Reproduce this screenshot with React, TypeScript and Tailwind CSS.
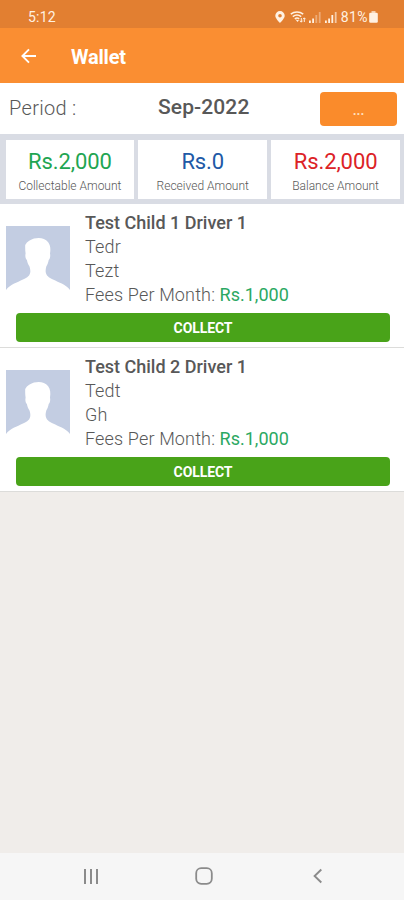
const SUMMARY = [
  { label: "Collectable Amount", value: "Rs.2,000", color: "text-[#1fa552]" },
  { label: "Received Amount", value: "Rs.0", color: "text-[#2059a6]" },
  { label: "Balance Amount", value: "Rs.2,000", color: "text-[#dc2226]" },
];

const CHILDREN = [
  { id: 1, name: "Test Child 1 Driver 1", school: "Tedr", area: "Tezt", fees: "Rs.1,000" },
  { id: 2, name: "Test Child 2 Driver 1", school: "Tedt", area: "Gh", fees: "Rs.1,000" },
];

function StatusBar() {
  return (
    <div className="flex h-[28px] items-center justify-between bg-[#e27f31] pt-[6px] pr-[26px] pl-[28px] text-[#fff1e2]">
      <span className="text-[14px] leading-none tracking-[0.2px]">5:12</span>
      <div className="flex items-center">
        <svg className="mr-[5px] h-[12px] w-[10px]" viewBox="0 0 10 12" fill="currentColor">
          <path fillRule="evenodd" d="M5 0a4.700 4.700 0 0 0-4.700 4.700C.3 7.600 5 12 5 12s4.700-4.400 4.700-7.300A4.700 4.700 0 0 0 5 0Zm0 3a1.800 1.800 0 1 1 0 3.600A1.800 1.800 0 0 1 5 3Z" />
        </svg>
        <svg className="mr-[2px] h-[12px] w-[17px]" viewBox="0 0 17 12" fill="none" stroke="currentColor">
          <path d="M.8 3.200C4.400.2 9.600.2 13.200 3.200M2.800 5.600c2.500-2 5.900-2 8.400 0M4.800 7.900c1.300-1 3.100-1 4.400 0" strokeWidth="1.500" />
          <path d="M5.500 8.600 7.500 11l1.500-1.800Z" fill="currentColor" stroke="none" />
          <path d="M11.300 7v4M10 9.700l1.300 1.500 1.200-1.500M14.300 11V7M13 8.200l1.300-1.400 1.200 1.400" strokeWidth="1" />
        </svg>
        <svg className="mr-[4px] h-[12px] w-[12px]" viewBox="0 0 12 12" fill="currentColor">
          <path d="M0 9.500h1.800V12H0zM3.200 7.500H5V12H3.200z" />
          <path d="M6.400 4h1.800v8H6.400zM9.800 1h1.800v11H9.800z" opacity=".4" />
        </svg>
        <svg className="mr-[4px] h-[12px] w-[12px]" viewBox="0 0 12 12" fill="currentColor">
          <path d="M0 9.500h1.800V12H0zM3.200 7.500H5V12H3.200zM6.400 4h1.800v8H6.400z" />
          <path d="M9.800 1h1.800v11H9.800z" opacity=".65" />
        </svg>
        <span className="text-[14px] leading-none tracking-[0.4px]">81%</span>
        <svg className="ml-[1px] h-[12px] w-[9px]" viewBox="0 0 9 12" fill="currentColor">
          <path d="M2.500 0h4v2h-4z" opacity=".7" />
          <rect x=".2" y="1.800" width="8.600" height="10" rx="1.300" />
        </svg>
      </div>
    </div>
  );
}

function Header() {
  return (
    <header className="flex h-[55px] items-center bg-[#fa8e32] pl-[21px] text-white">
      <svg className="mt-[1px] h-[16px] w-[15px]" viewBox="0 0 15 16" fill="none" stroke="currentColor" strokeWidth="1.900">
        <path d="M15 8H1.600M8 1.400 1.400 8 8 14.600" />
      </svg>
      <h1 className="mt-[2px] ml-[35px] text-[20px] leading-6 font-bold tracking-[-0.2px]">Wallet</h1>
    </header>
  );
}

function Avatar() {
  return (
    <svg className="h-[64px] w-[64px]" viewBox="0 0 64 64">
      <path fill="#c3cde2" d="M0 0h64v64H0z" />
      <path
        fill="#fff"
        d="M0 64c4-5.500 11-7.500 17-10.500 4.500-2 7-4 7.300-7.500.2-2-.3-4-.8-5.500-1.300-2-2.200-4-2.600-6.500-1.400-1-1.900-4-1.300-6.500-.5-3-.4-5.500-.4-8.500C21 15.500 25 13.500 28 12.600c5-1.500 11-.6 14 3.400 2.400 3 2.800 7 2 11.500.6 2.500 0 5.500-1.300 6.500-.4 2.500-1.200 4.500-2.400 6.500-.5 2-.8 3.500-.6 5.500.4 3.500 3 5.500 7.300 7.500 6 3 13 5 17 10.500Z"
      />
    </svg>
  );
}

function ChildCard({ child }: { child: (typeof CHILDREN)[number] }) {
  return (
    <li className="h-[144px] border-b border-[#dcdcda] bg-white">
      <div className="flex pt-[7px] pl-[6px]">
        <div className="pt-[15px]">
          <Avatar />
        </div>
        <div className="ml-[15px] text-[18px] leading-[24px] font-light tracking-[0.15px] text-[#585858]">
          <p className="font-medium tracking-normal">{child.name}</p>
          <p>{child.school}</p>
          <p>{child.area}</p>
          <p>
            Fees Per Month: <span className="font-normal tracking-normal text-[#2ba862]">{child.fees}</span>
          </p>
        </div>
      </div>
      <button className="mt-[6px] ml-[16px] block h-[29px] w-[374px] rounded-[4px] bg-[#49a319] pt-px text-center text-[14px] leading-[29px] font-bold tracking-[-0.1px] text-white">
        COLLECT
      </button>
    </li>
  );
}

function NavBar() {
  return (
    <nav className="flex h-[47px] items-center bg-[#f6f6f6] pb-px pl-[83px] text-[#8b8b8b]">
      <svg className="h-[15px] w-[16px]" viewBox="0 0 16 15" fill="none" stroke="currentColor" strokeWidth="2">
        <path d="M2 0v15M8 0v15M14 0v15" />
      </svg>
      <svg className="ml-[96px] h-[18px] w-[18px]" viewBox="0 0 18 18" fill="none" stroke="currentColor" strokeWidth="1.800">
        <rect x="1.200" y="1.200" width="15.600" height="15.600" rx="5" />
      </svg>
      <svg className="ml-[100px] h-[16px] w-[9px]" viewBox="0 0 9 16" fill="none" stroke="currentColor" strokeWidth="1.900">
        <path d="M8.300 1.500 1.600 8l6.700 6.500" />
      </svg>
    </nav>
  );
}

export default function App() {
  return (
    <div className="flex h-[900px] w-[404px] flex-col overflow-hidden bg-[#f0edea] font-['Roboto',sans-serif]">
      <StatusBar />
      <Header />
      <section className="flex h-[51px] items-center bg-white pr-[7px] pl-[9px]">
        <span className="w-[149px] pb-[2px] text-[20px] font-light tracking-[0.3px] text-[#585858]">Period :</span>
        <span className="flex-1 pb-[2px] text-[21px] font-medium tracking-[0.1px] text-[#585858]">Sep-2022</span>
        <button className="h-[34px] w-[77px] rounded-[4px] bg-[#fa8b2b] pt-[2px] text-center text-[14px] leading-[30px] font-medium text-[#ffe2c4]">
          ...
        </button>
      </section>
      <section className="grid h-[70px] grid-cols-3 gap-[4px] bg-[#d9dce4] pt-[6px] pr-[4px] pb-[5px] pl-[5.5px]">
        {SUMMARY.map((item) => (
          <div key={item.label} className="bg-white pt-[8px] text-center">
            <div className={`text-[22px] leading-[28px] tracking-[-0.1px] ${item.color}`}>{item.value}</div>
            <div className="mt-[2px] text-[12px] leading-[16px] font-light text-[#585858]">{item.label}</div>
          </div>
        ))}
      </section>
      <ul>
        {CHILDREN.map((child) => (
          <ChildCard key={child.id} child={child} />
        ))}
      </ul>
      <div className="flex-1" />
      <NavBar />
    </div>
  );
}
